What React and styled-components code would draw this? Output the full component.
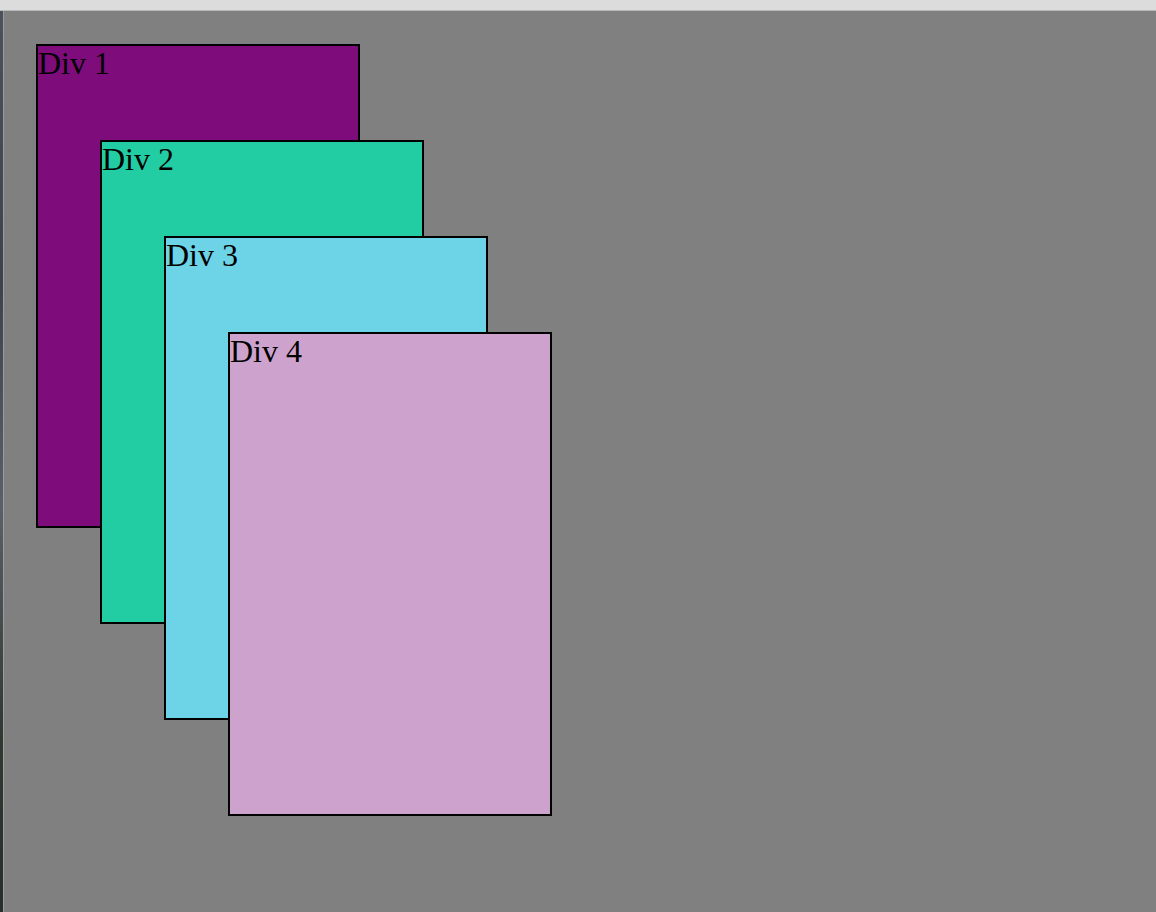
import React from "react";
import styled, { createGlobalStyle } from "styled-components";

const GlobalStyle = createGlobalStyle`
  html, body {
    margin: 0;
    padding: 0;
    height: 100%;
    background: #808080;
  }
  #root {
    height: 100%;
  }
`;

const Window = styled.div`
  display: flex;
  flex-direction: column;
  width: 1156px;
  height: 912px;
  overflow: hidden;
`;

const TopBar = styled.div`
  height: 10px;
  flex: none;
  background: #dcdcdc;
  border-bottom: 1px solid #b9b9b9;
`;

const Body = styled.div`
  flex: 1;
  display: flex;
`;

const Desktop = styled.div`
  width: 3px;
  flex: none;
  background: linear-gradient(180deg, #4b525a 0%, #3c434a 30%, #5a6068 55%, #2f3a33 80%, #26302a 100%);
  border-right: 1px solid #9c9c9c;
`;

const Canvas = styled.div`
  flex: 1;
  display: grid;
  align-content: start;
  justify-content: start;
  padding: 33px 0 0 32px;
  background: #808080;
`;

const Card = styled.div`
  grid-area: 1 / 1;
  margin: ${p => p.$step * 96}px 0 0 ${p => p.$step * 64}px;
  width: 320px;
  height: 480px;
  border: 2px solid #000;
  background: ${p => p.$color};
  font-family: "Liberation Serif", "Times New Roman", serif;
  font-size: 32px;
  line-height: 1.07;
  color: #000;
`;

const cards = [
  { label: "Div 1", color: "#7f0c7b" },
  { label: "Div 2", color: "#22cda4" },
  { label: "Div 3", color: "#6dd4e7" },
  { label: "Div 4", color: "#cda3cd" }
];

export default function App() {
  return (
    <>
      <GlobalStyle />
      <Window>
        <TopBar />
        <Body>
          <Desktop />
          <Canvas>
            {cards.map((c, i) => (
              <Card key={c.label} $step={i} $color={c.color}>
                {c.label}
              </Card>
            ))}
          </Canvas>
        </Body>
      </Window>
    </>
  );
}
